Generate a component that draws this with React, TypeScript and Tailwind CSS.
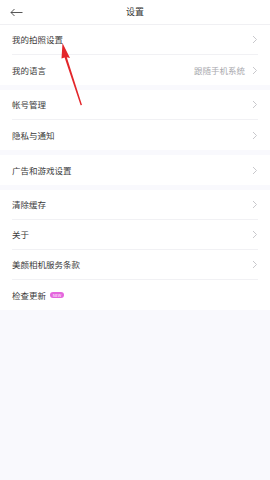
import React from "react";

const Chevron = () => (
  <svg width="6" height="9" viewBox="0 0 6 9" fill="none" className="shrink-0">
    <path d="M1 1l3.5 3.5L1 8" stroke="#c8c8cc" strokeWidth="1" />
  </svg>
);

const Row = ({
  label,
  value,
  badge,
  last,
  arrow = true,
}: {
  label: string;
  value?: string;
  badge?: boolean;
  last?: boolean;
  arrow?: boolean;
}) => (
  <div className="flex h-[30px] items-center px-3">
    <div
      className={`flex h-full flex-1 items-center ${last ? "" : "border-b border-[#f1f1f4]"}`}
    >
      <span className="text-[8.5px] text-[#3a3a3a]">{label}</span>
      {badge && (
        <span className="ml-[4px] flex h-[6px] w-[14px] items-center justify-center rounded-full bg-[#e466dd] text-[4px] leading-none text-white">
          NEW
        </span>
      )}
      <div className="flex-1" />
      {value && <span className="mr-[7px] text-[8.5px] text-[#a9a9ae]">{value}</span>}
      {arrow && <Chevron />}
    </div>
  </div>
);

export default function App() {
  return (
    <div
      className="relative h-[480px] w-[270px] overflow-hidden bg-[#f9f9fd]"
      style={{ fontFamily: '"Noto Sans CJK SC", "Noto Sans", sans-serif' }}
    >
      <header className="relative flex h-[25px] items-center justify-center border-b border-[#f0f0f3] bg-white">
        <svg
          width="13"
          height="9"
          viewBox="0 0 13 9"
          fill="none"
          className="absolute left-[10px] top-[8px]"
        >
          <path d="M12.5 4.5H1M4.5 1L1 4.5 4.5 8" stroke="#444" strokeWidth="0.9" />
        </svg>
        <span className="text-[9px] text-[#333]">设置</span>
      </header>

      <div className="flex flex-col gap-[5px]">
        <div className="bg-white">
          <Row label="我的拍照设置" />
          <Row label="我的语言" value="跟随手机系统" last />
        </div>
        <div className="bg-white">
          <Row label="帐号管理" />
          <Row label="隐私与通知" last />
        </div>
        <div className="bg-white">
          <Row label="广告和游戏设置" last />
        </div>
        <div className="bg-white">
          <Row label="清除缓存" />
          <Row label="关于" />
          <Row label="美颜相机服务条款" />
          <Row label="检查更新" badge arrow={false} last />
        </div>
      </div>

      <svg
        width="270"
        height="480"
        viewBox="0 0 270 480"
        className="pointer-events-none absolute left-0 top-0"
      >
        <path d="M62.5 43 L70 58 L66.8 57.2 L82 105 L80.6 105.3 L64.6 57.5 L61.5 58.5 Z" fill="#e3262a" />
      </svg>
    </div>
  );
}
